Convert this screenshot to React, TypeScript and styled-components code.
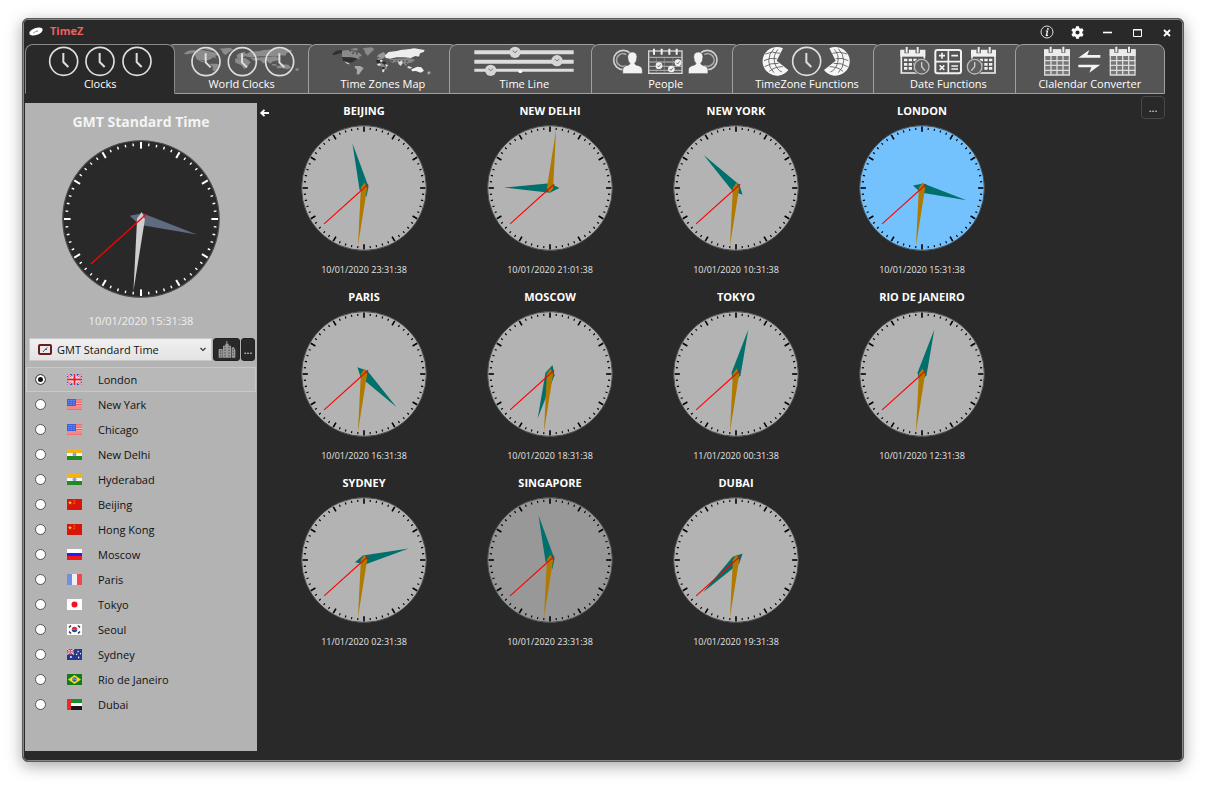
import React from 'react';
import styled, { createGlobalStyle } from 'styled-components';
import { FaCog } from 'react-icons/fa';

const Global = createGlobalStyle`
  * { box-sizing: border-box; }
  body { margin: 0; background: #fff; font-family: "Segoe UI", "Open Sans", "Noto Sans", sans-serif; font-size: 11px; line-height: 16px; }
  button, select, input { font: inherit; margin: 0; padding: 0; }
  svg { display: block; overflow: visible; }
`;

const Page = styled.div`
  min-height: 100vh;
  display: flex;
  padding: 18px 21px 25px 22px;
`;

const Window = styled.div`
  flex: 1;
  display: flex;
  flex-direction: column;
  padding: 1px;
  background: #292929;
  border: 1px solid #5c5c5c;
  border-radius: 6px;
  box-shadow: inset 0 0 0 1px #868686, 0 4px 16px rgba(0, 0, 0, 0.35);
`;

const TitleBar = styled.header`
  display: flex;
  align-items: center;
  height: 24px;
  padding-left: 5px;
`;

const AppName = styled.h1`
  flex: 1;
  margin: 0 0 2px 7px;
  font-size: 11px;
  line-height: 16px;
  font-weight: 700;
  color: #f0605f;
`;

const TitleButton = styled.button`
  display: flex;
  align-items: center;
  justify-content: center;
  width: 30px;
  height: 24px;
  border: 0;
  background: none;
  color: #fff;
`;

const TabBar = styled.nav`
  display: flex;
  margin: 0 17px 0 1px;
`;

const Tab = styled.button<{ $active?: boolean }>`
  position: relative;
  z-index: ${p => (p.$active ? 1 : 0)};
  flex: 1 1 0;
  min-width: 0;
  height: 50px;
  display: flex;
  flex-direction: column;
  align-items: center;
  padding-top: 1px;
  border: 1px solid ${p => (p.$active ? '#8a8a8a' : '#a0a0a0')};
  border-bottom-color: ${p => (p.$active ? '#292929' : '#a0a0a0')};
  border-radius: 8px 8px 0 0;
  background: ${p => (p.$active ? '#292929' : '#555')};
  color: #fff;
  white-space: nowrap;
  & + & { margin-left: -9px; }
`;

const TabLabel = styled.span`
  line-height: 12px;
`;

const Body = styled.div`
  flex: 1;
  display: flex;
  align-items: stretch;
  padding: 0 17px 9px 1px;
`;

const Sidebar = styled.aside`
  width: 232px;
  flex: none;
  display: flex;
  flex-direction: column;
  align-items: center;
  margin-top: 9px;
  padding-top: 9px;
  background: #b3b3b3;
`;

const ZoneTitle = styled.h2`
  margin: 0 0 8px;
  font-size: 14px;
  line-height: 20px;
  font-weight: 700;
  color: #f4f4f4;
`;

const ZoneDate = styled.time`
  margin: 15px 0 9px;
  line-height: 16px;
  color: #f0f0f0;
`;

const PickerRow = styled.div`
  align-self: stretch;
  display: flex;
  height: 23px;
  margin: 0 2px 6px 4px;
  gap: 1px;
`;

const SelectWrap = styled.label`
  position: relative;
  flex: 1;
  display: flex;
`;

const ZoneSelect = styled.select`
  appearance: none;
  width: 100%;
  padding-left: 27px;
  border: 1px solid #c8c8c8;
  border-radius: 0;
  background: linear-gradient(#f0f0f0, #e3e3e3);
  color: #111;
`;

const ZoneIcon = styled.svg`
  position: absolute;
  left: 9px;
  top: 6px;
  pointer-events: none;
`;

const Chevron = styled.svg`
  position: absolute;
  right: 6px;
  top: 9px;
  pointer-events: none;
`;

const DarkButton = styled.button<{ $width: number }>`
  width: ${p => p.$width}px;
  display: flex;
  align-items: center;
  justify-content: center;
  border: 1px solid #222;
  border-radius: 3px;
  background: #292929;
  color: #eee;
`;

const CityList = styled.ul`
  align-self: stretch;
  list-style: none;
  margin: 0;
  padding: 0 1px;
`;

const CityRow = styled.label<{ $selected: boolean }>`
  display: flex;
  align-items: center;
  height: 25px;
  padding-left: 8px;
  border: 1px solid ${p => (p.$selected ? '#c8c8c8' : 'transparent')};
  background: ${p => (p.$selected ? '#b8b8b8' : 'transparent')};
  color: #111;
`;

const Flag = styled.svg`
  margin: 0 16px 0 21px;
`;

const Radio = styled.input`
  appearance: none;
  width: 11px;
  height: 11px;
  border: 1px solid #555;
  border-radius: 50%;
  background: #fff;
  &:checked { background: #111; box-shadow: inset 0 0 0 2px #fff; }
`;

const BackButton = styled.button`
  width: 14px;
  height: 14px;
  margin-top: 12px;
  display: flex;
  align-items: center;
  justify-content: center;
  border: 0;
  background: none;
`;

const ClockGrid = styled.main`
  flex: 1;
  display: flex;
  flex-wrap: wrap;
  align-content: flex-start;
  padding-top: 9px;
`;

const ClockCard = styled.article`
  width: 186px;
  height: 186px;
  display: flex;
  flex-direction: column;
  align-items: center;
`;

const ClockName = styled.h3`
  margin: 0 0 6px;
  font-size: 11px;
  line-height: 16px;
  font-weight: 700;
  color: #fff;
`;

const ClockDate = styled.time`
  margin-top: 11px;
  font-size: 9px;
  line-height: 16px;
  color: #e4e4e4;
`;

const MoreButton = styled.button`
  width: 24px;
  height: 23px;
  margin-top: 2px;
  border: 1px solid #484848;
  border-radius: 4px;
  background: #292929;
  color: #eee;
`;

type FaceColors = { face: string; tick: string; hour: string; minute: string };

function Clock({ size, time, colors }: { size: number; time: string; colors: FaceColors }) {
  const [h, m, s] = time.split(':').map(Number);
  return (
    <svg width={size} height={size} viewBox="-101 -101 202 202" role="img" aria-label={time}>
      <circle r="100" fill={colors.face} stroke="#4a4a4a" strokeWidth="1.5" />
      {Array.from({ length: 60 }, (_, i) => (
        <line
          key={i}
          y1={i % 5 ? -97 : -98.5}
          y2={i % 5 ? -93.5 : -90}
          stroke={colors.tick}
          strokeWidth={i % 5 ? 1.8 : 2.6}
          transform={`rotate(${i * 6})`}
        />
      ))}
      <path d="M0-74L7.5 0 0 15-7.5 0Z" fill={colors.hour} transform={`rotate(${(h % 12) * 30 + m / 2})`} />
      <path d="M0-93L5 0 0 9-5 0Z" fill={colors.minute} transform={`rotate(${m * 6})`} />
      <line y1="9" y2="-86" stroke="#f00" strokeWidth="1.7" transform={`rotate(${s * 6})`} />
    </svg>
  );
}

const faceColors = (face: string): FaceColors => ({ face, tick: '#000', hour: '#00706c', minute: '#b07a00' });
const localFace: FaceColors = { face: '#292929', tick: '#fff', hour: '#5f6c80', minute: '#cfcfcf' };

const clocks = [
  ['BEIJING', '10/01/2020', '23:31:38'],
  ['NEW DELHI', '10/01/2020', '21:01:38'],
  ['NEW YORK', '10/01/2020', '10:31:38'],
  ['LONDON', '10/01/2020', '15:31:38', '#73c2fd'],
  ['PARIS', '10/01/2020', '16:31:38'],
  ['MOSCOW', '10/01/2020', '18:31:38'],
  ['TOKYO', '11/01/2020', '00:31:38'],
  ['RIO DE JANEIRO', '10/01/2020', '12:31:38'],
  ['SYDNEY', '11/01/2020', '02:31:38'],
  ['SINGAPORE', '10/01/2020', '23:31:38', '#989898'],
  ['DUBAI', '10/01/2020', '19:31:38'],
];

/* ---------- flags, 15 x 11 ---------- */

const bands = (a: string, b: string, c: string) => (
  <>
    <rect width="15" height="4" fill={a} />
    <rect y="4" width="15" height="3" fill={b} />
    <rect y="7" width="15" height="4" fill={c} />
  </>
);

const flags: Record<string, React.ReactNode> = {
  uk: (
    <>
      <rect width="15" height="11" fill="#3a53b0" />
      <path d="M0 0L15 11M15 0L0 11" stroke="#f4dfe4" strokeWidth="2.4" />
      <path d="M0 0L15 11M15 0L0 11" stroke="#e0455a" strokeWidth="0.9" />
      <path d="M7.5 0V11M0 5.5H15" stroke="#fff" strokeWidth="4" />
      <path d="M7.5 0V11M0 5.5H15" stroke="#e8202c" strokeWidth="2" />
    </>
  ),
  us: (
    <>
      <rect width="15" height="11" fill="#f8b8b8" />
      <path d="M0 .8H15M0 3.2H15M0 5.6H15M0 8H15M0 10.2H15" stroke="#ee5858" strokeWidth="1.2" />
      <rect width="9" height="7" fill="#3c60dc" />
      <path d="M1 1.5H8M1 3.4H8M1 5.3H8" stroke="#90a8f4" strokeWidth=".8" strokeDasharray=".8 .8" />
    </>
  ),
  india: (
    <>
      {bands('#f7b50c', '#f4f4f4', '#1f8a1f')}
      <circle cx="7.5" cy="5.5" r="1.6" fill="#8fa5dd" stroke="#5473c8" strokeWidth=".5" />
    </>
  ),
  china: (
    <>
      <rect width="15" height="11" fill="#d81508" />
      <path d="M3 1.6l.6 1.4h1.5L3.9 4l.5 1.5L3 4.6 1.7 5.5l.5-1.5L1 3h1.500z" fill="#ffc928" />
      <path d="M6.500 1.200h1M7.200 2.800h1M6.500 4.500h1" stroke="#ffa820" strokeWidth=".9" />
    </>
  ),
  russia: bands('#fff', '#2020f0', '#f01818'),
  france: (
    <>
      <rect width="5" height="11" fill="#6f8fe0" />
      <rect x="5" width="5" height="11" fill="#f0f0f4" />
      <rect x="10" width="5" height="11" fill="#f04848" />
    </>
  ),
  japan: (
    <>
      <rect width="15" height="11" fill="#fff" />
      <circle cx="7.5" cy="5.5" r="3" fill="#f01424" />
    </>
  ),
  korea: (
    <>
      <rect width="15" height="11" fill="#fff" />
      <path d="M4.700 5.500a2.800 2.800 0 015.600 0z" fill="#e02838" />
      <path d="M4.700 5.500a2.800 2.800 0 005.600 0z" fill="#2848a0" />
      <path d="M2 3.500L4 1.500M11 1.500L13 3.500M2 7.500L4 9.500M11 9.500L13 7.500" stroke="#333" strokeWidth="1.500" />
    </>
  ),
  australia: (
    <>
      <rect width="15" height="11" fill="#28388c" />
      <path d="M0 0L7 5.500M7 0L0 5.500M3.500 0V5.500M0 2.800H7" stroke="#f0c8d0" strokeWidth="1.300" />
      <path d="M3.500 0V5.500M0 2.800H7" stroke="#d83040" strokeWidth=".7" />
      <path d="M3 8h1.800M10.500 2.500h1.200M9 5.300h1.200M13 4.700h1M11 8.500h1.300" stroke="#fff" strokeWidth="1.300" />
    </>
  ),
  brazil: (
    <>
      <rect width="15" height="11" fill="#147a1c" />
      <path d="M7.500 1L14 5.500 7.500 10 1 5.500z" fill="#f2e21a" />
      <circle cx="7.500" cy="5.500" r="2.300" fill="#3058c0" />
      <path d="M5.400 5.100q2.200-.6 4.200 1" stroke="#d8e4f8" strokeWidth=".6" fill="none" />
    </>
  ),
  uae: (
    <>
      {bands('#189028', '#fff', '#181818')}
      <rect width="4" height="11" fill="#f02828" />
    </>
  ),
};

const cities = [
  ['London', 'uk'], ['New Yark', 'us'], ['Chicago', 'us'], ['New Delhi', 'india'], ['Hyderabad', 'india'],
  ['Beijing', 'china'], ['Hong Kong', 'china'], ['Moscow', 'russia'], ['Paris', 'france'], ['Tokyo', 'japan'],
  ['Seoul', 'korea'], ['Sydney', 'australia'], ['Rio de Janeiro', 'brazil'], ['Dubai', 'uae'],
];

/* ---------- tab drawings, three units to the pixel ---------- */

const ClockGlyph = ({ x, y = 46 }: { x: number; y?: number }) => (
  <g transform={`translate(${x} ${y})`} fill="none" stroke="#dedede">
    <circle r="42" strokeWidth="5" />
    <path d="M-1-25V2L14 17" strokeWidth="6" />
  </g>
);

const WorldMap = ({ mono }: { mono?: string }) => (
  <g>
    <path fill={mono || '#303030'} d="M13 24L24 14 41 12 44 22 36 22 20 27 13 26ZM41 31L76 34 88 38 80 44 70 50 46 46Z" />
    <path fill={mono || '#8a8a8a'} d="M42 14L60 12 80 17 96 22 102 30 92 32 96 40 86 37 72 34 42 33ZM66 10L82 6 92 9 84 14ZM104 7L131 4 139 10 128 20 119 29 112 22 110 14Z" />
    <path fill={mono || '#d0d0d0'} d="M48 46L60 50 66 55 58 54Z" />
    <path fill={mono || '#a8a8a8'} d="M80 60L96 60 107 66 100 76 92 86 86 84 87 72 80 64Z" />
    {mono && <path fill={mono} d="M144 42L170 40 184 54 176 68 168 80 160 66 144 56Z" />}
    {!mono && (
      <>
        <path fill="#2c2c2c" d="M144 43L156 42 158 49 148 54ZM162 46L174 48 172 56 164 54ZM160 62L168 60 170 68 164 70Z" />
        <path fill="#e0e0e0" d="M156 42L164 41 163 47 157 48ZM146 54L156 52 160 58 152 60ZM172 54L181 58 174 64ZM162 71L170 69 168 79 163 78Z" />
        <path fill="#888" d="M158 50L166 54 172 62 160 64ZM170 64L178 62 176 70 170 71Z" />
      </>
    )}
    <path fill={mono || '#9a9a9a'} d="M148 30L154 24 168 18 174 30 164 38 150 42Z" />
    <path fill={mono || '#ededed'} d="M171 28L182 18 206 15 218 12 246 9 258 7 290 12 287 18 276 22 273 32 262 30 248 36 228 34 206 34 186 38 173 36Z" />
    <path fill={mono || '#858585'} d="M184 40L246 36 262 42 250 50 240 52 234 60 224 50 216 56 208 48 192 50Z" />
    <path fill={mono || '#dcdcdc'} d="M210 46L222 44 224 52 218 60 212 54ZM240 60L252 64 248 68 238 66Z" />
    <path fill={mono || '#f0f0f0'} d="M250 70L268 62 280 64 288 74 278 80 264 75 252 76Z" />
    <path fill={mono || '#aaa'} d="M298 78L306 76 308 82 300 86Z" />
  </g>
);

const MapDots = () => (
  <path stroke="#3a3a3a" strokeWidth="3" strokeDasharray="5 8 3 6" fill="none" d="M150 34L172 44M190 44L246 46M64 14L96 28M72 22L92 20M270 36L276 28M234 52L242 58" />
);

const ClocksArt = () => (<><ClockGlyph x={56} /><ClockGlyph x={165} /><ClockGlyph x={276} /></>);

const WorldClocksArt = () => (
  <>
    <g transform="translate(-24 2) scale(1.17 .85)"><WorldMap mono="#8c8c8c" /></g>
    <ClockGlyph x={57} y={47} /><ClockGlyph x={166} y={47} /><ClockGlyph x={278} y={47} />
  </>
);

const Slider = ({ x, y }: { x: number; y: number }) => (
  <g transform={`translate(${x} ${y})`}>
    <circle r="17" fill="#d6d6d6" />
    <path d="M-7-5L0 1 7-5" fill="none" stroke="#777" strokeWidth="3" />
  </g>
);

const TimeLineArt = () => (
  <>
    <path d="M16 19H314M16 47H314" stroke="#dcdcdc" strokeWidth="12" />
    <path d="M16 73H314" stroke="#dcdcdc" strokeWidth="9" />
    <Slider x={138} y={19} /><Slider x={264} y={44} /><Slider x={65} y={73} />
    <ellipse cx="154" cy="77" rx="6" ry="4" fill="#fff" />
  </>
);

const Person = () => (
  <g>
    <circle cx="37" cy="42" r="29" fill="none" stroke="#d0d0d0" strokeWidth="5" />
    <path d="M46 26a19 19 0 100 32" fill="none" stroke="#aaa" strokeWidth="5" />
    <path d="M35 83V72Q35 60 53 57L57 53Q50 44 50 32 52 18 64 18 77 18 78 32 78 44 71 53L75 57Q94 60 94 72V83Z" fill="#f2f2f2" stroke="#555" strokeWidth="2" />
  </g>
);

const PeopleArt = () => (
  <>
    <Person />
    <g transform="translate(326 0) scale(-1 1)"><Person /></g>
    <rect x="113" y="15" width="100" height="67" fill="none" stroke="#d8d8d8" strokeWidth="4" />
    <path d="M129 8V26M152 8V26M175 8V26M197 8V26" stroke="#f0f0f0" strokeWidth="6" />
    <path d="M113 34H213M113 48H213M113 61H213M113 73H213" stroke="#bbb" strokeWidth="3" />
    <path d="M136 34V82M160 34V82M186 34V82" stroke="#999" strokeWidth="2" />
    {[[144, 59], [181, 69], [201, 50]].map(([x, y]) => (
      <g key={x} transform={`translate(${x} ${y})`}>
        <circle r="10" fill="#f0f0f0" />
        <path d="M-4 0L-1 4 5-4" fill="none" stroke="#666" strokeWidth="2.500" />
      </g>
    ))}
  </>
);

const HalfGlobe = () => (
  <g>
    <path d="M93 7A43 43 0 1 0 109 72L74 44Z" fill="#f6f6f6" />
    <g fill="none" stroke="#5a5a5a" strokeWidth="2.600">
      <path d="M66 8Q50 24 50 44T66 80M78 10Q62 28 68 50T90 78M40 24Q60 14 84 22M36 44Q54 34 74 38M38 62Q56 50 80 52M52 76Q68 62 92 62" />
    </g>
  </g>
);

const ZoneFunctionsArt = () => (
  <>
    <HalfGlobe />
    <ClockGlyph x={164} />
    <g transform="translate(325 0) scale(-1 1)"><HalfGlobe /></g>
  </>
);

const DateCalendar = () => (
  <g>
    <path d="M25 14H94V81H25Z" fill="none" stroke="#f0f0f0" strokeWidth="5" />
    <path d="M22 12H97V32H22Z" fill="#f0f0f0" />
    <path d="M41 2V22M74 2V22" stroke="#555" strokeWidth="13" />
    <path d="M41 3V20M74 3V20" stroke="#f0f0f0" strokeWidth="6" />
    <path d="M33 42H88M33 55H88M33 67H88" stroke="#f0f0f0" strokeWidth="8" strokeDasharray="10 4" />
    <circle cx="86" cy="62" r="26" fill="#555" />
    <circle cx="86" cy="62" r="22" fill="#606060" stroke="#b8b8b8" strokeWidth="4" />
  </g>
);

const DateFunctionsArt = () => (
  <>
    <DateCalendar />
    <path d="M86 48V62L96 74" fill="none" stroke="#ccc" strokeWidth="4" />
    <g transform="translate(331 0) scale(-1 1)"><DateCalendar /></g>
    <path d="M245 48V62L235 74" fill="none" stroke="#ccc" strokeWidth="4" />
    <rect x="127" y="12" width="77" height="70" rx="6" fill="none" stroke="#f2f2f2" strokeWidth="6" />
    <path d="M166 12V82M127 47H204M138 29H156M147 20V38M175 29H195M175 60H195M175 69H195M140 58L154 72M154 58L140 72" stroke="#f2f2f2" strokeWidth="5" />
  </>
);

const GridCalendar = ({ x }: { x: number }) => (
  <g transform={`translate(${x} 0)`}>
    <path d="M2 12H76V87H2Z" fill="#777" stroke="#dadada" strokeWidth="4" />
    <path d="M0 10H78V30H0Z" fill="#ececec" />
    <path d="M20 1V20M58 1V20" stroke="#555" strokeWidth="12" />
    <path d="M20 2V19M58 2V19" stroke="#ececec" strokeWidth="6" />
    <path d="M21 30V87M39 30V87M57 30V87M0 44H78M0 58H78M0 73H78" stroke="#dadada" strokeWidth="4" />
  </g>
);

const ConverterArt = () => (
  <>
    <GridCalendar x={27} />
    <GridCalendar x={224} />
    <path d="M130 35L163 12 157 27H196V35ZM196 56L163 80 169 64H130V56Z" fill="#f4f4f4" />
  </>
);

const MapArt = () => (<><WorldMap /><MapDots /></>);

const tabs: [string, () => React.ReactElement][] = [
  ['Clocks', ClocksArt],
  ['World Clocks', WorldClocksArt],
  ['Time Zones Map', MapArt],
  ['Time Line', TimeLineArt],
  ['People', PeopleArt],
  ['TimeZone Functions', ZoneFunctionsArt],
  ['Date Functions', DateFunctionsArt],
  ['Clalendar Converter', ConverterArt],
];

export default function App() {
  const [city, setCity] = React.useState('London');
  const [tab, setTab] = React.useState('Clocks');
  return (
    <Page>
      <Global />
      <Window>
        <TitleBar>
          <svg width="14" height="12" viewBox="0 0 14 12" aria-hidden="true">
            <ellipse cx="7" cy="5.500" rx="7" ry="3.500" fill="#fff" transform="rotate(-20 7 5.500)" />
            <path d="M4 7L7 5.500 8.500 4M7 5.500L9 5.300" stroke="#c77" strokeWidth=".8" fill="none" />
          </svg>
          <AppName>TimeZ</AppName>
          <TitleButton aria-label="About">
            <svg width="14" height="14" viewBox="0 0 14 14">
              <circle cx="7" cy="7" r="6" fill="none" stroke="#ddd" strokeWidth="1" />
              <circle cx="7.900" cy="3.900" r=".9" fill="#fff" />
              <path d="M5.800 6H7.500L6.400 10.300H8" fill="none" stroke="#fff" strokeWidth="1.200" />
            </svg>
          </TitleButton>
          <TitleButton aria-label="Settings"><FaCog size={13} /></TitleButton>
          <TitleButton aria-label="Minimize">
            <svg width="10" height="10"><path d="M1 5.500H10" stroke="#fff" strokeWidth="1.600" /></svg>
          </TitleButton>
          <TitleButton aria-label="Maximize">
            <svg width="10" height="10"><path d="M1.500 2.500H9.500V9.500H1.500ZM1 3H10" fill="none" stroke="#fff" /></svg>
          </TitleButton>
          <TitleButton aria-label="Close">
            <svg width="10" height="10"><path d="M2 3L8 9M8 3L2 9" stroke="#fff" strokeWidth="1.800" /></svg>
          </TitleButton>
        </TitleBar>

        <TabBar role="tablist">
          {tabs.map(([label, Art]) => (
            <Tab key={label} role="tab" aria-selected={tab === label} $active={tab === label} onClick={() => setTab(label)}>
              <svg width="110" height="32" viewBox="0 0 330 96" aria-hidden="true"><Art /></svg>
              <TabLabel>{label}</TabLabel>
            </Tab>
          ))}
        </TabBar>

        <Body>
          <Sidebar>
            <ZoneTitle>GMT Standard Time</ZoneTitle>
            <Clock size={158} time="15:31:38" colors={localFace} />
            <ZoneDate>10/01/2020 15:31:38</ZoneDate>
            <PickerRow>
              <SelectWrap>
                <ZoneSelect aria-label="Time zone" defaultValue="GMT Standard Time">
                  <option>GMT Standard Time</option>
                </ZoneSelect>
                <ZoneIcon width="14" height="11" viewBox="0 0 14 11">
                  <rect x="1" y="1" width="12" height="9" rx="1" fill="#e8e8e8" stroke="#6b1c1f" strokeWidth="2" />
                  <path d="M5 8L7 5.500H9M7 5.500L9.500 3.500" fill="none" stroke="#333" strokeWidth=".8" />
                </ZoneIcon>
                <Chevron width="6" height="5" viewBox="0 0 6 5">
                  <path d="M.5 1L3 3.500 5.500 1" fill="none" stroke="#333" strokeWidth="1.100" />
                </Chevron>
              </SelectWrap>
              <DarkButton $width={27} aria-label="Cities">
                <svg width="18" height="18" viewBox="0 0 54 54">
                  <path d="M2 50V24H14V50ZM41 50V20L47 18 52 26V50ZM15 50V14H22V8H25V0H28V8H32V14H39V50Z" fill="#9a9a9a" />
                  <path d="M21 18V48M33 18V48M8 27V48M46 24V48" stroke="#444" strokeWidth="3" strokeDasharray="4 4" />
                </svg>
              </DarkButton>
              <DarkButton $width={14} aria-label="More cities">...</DarkButton>
            </PickerRow>
            <CityList>
              {cities.map(([name, flag]) => (
                <li key={name}>
                  <CityRow $selected={city === name}>
                    <Radio type="radio" name="city" checked={city === name} onChange={() => setCity(name)} />
                    <Flag width="15" height="11" viewBox="0 0 15 11" aria-hidden="true">
                      <clipPath id={`clip-${flag}`}><rect width="15" height="11" /></clipPath>
                      <g clipPath={`url(#clip-${flag})`}>{flags[flag]}</g>
                    </Flag>
                    {name}
                  </CityRow>
                </li>
              ))}
            </CityList>
          </Sidebar>

          <BackButton aria-label="Collapse panel">
            <svg width="9" height="8" viewBox="0 0 9 8">
              <path d="M9 4H1.500M4.500 .8L1.200 4 4.500 7.200" fill="none" stroke="#fff" strokeWidth="1.800" />
            </svg>
          </BackButton>
          <ClockGrid>
            {clocks.map(([name, date, time, face]) => (
              <ClockCard key={name}>
                <ClockName>{name}</ClockName>
                <Clock size={126} time={time} colors={faceColors(face || '#b3b3b3')} />
                <ClockDate>{date} {time}</ClockDate>
              </ClockCard>
            ))}
          </ClockGrid>
          <MoreButton aria-label="More options">...</MoreButton>
        </Body>
      </Window>
    </Page>
  );
}
